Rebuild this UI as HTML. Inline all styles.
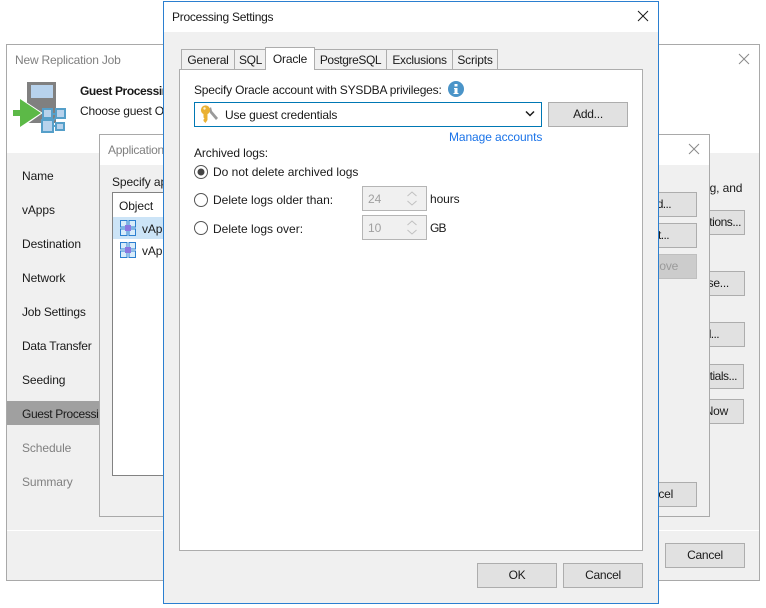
<!DOCTYPE html>
<html><head><meta charset="utf-8">
<style>
html,body{margin:0;padding:0;background:#fff}
#r{position:relative;width:766px;height:608px;overflow:hidden;background:#fff;font:12px/16px "Liberation Sans",sans-serif;color:#1a1a1a;letter-spacing:-.1px}
#r div,#r span.t,#r svg{position:absolute;box-sizing:border-box}
.t{white-space:nowrap;position:absolute}
.btn{background:#e1e1e1;border:1px solid #adadad;text-align:center;line-height:22px;color:#1a1a1a;overflow:hidden;letter-spacing:-.25px;white-space:nowrap}
.tab{background:#f0f0f0;border:1px solid #adadad;border-bottom:0;text-align:center;line-height:20px;height:20px;top:49px;letter-spacing:-.2px}
.g{color:#808080}
</style></head><body>
<div id="r">
<!-- back window -->
<div style="left:6px;top:44px;width:754px;height:537px;background:#f0f0f0;border:1px solid #a9a9a9"></div>
<div style="left:7px;top:45px;width:752px;height:108px;background:#fff"></div>
<span class="t" style="left:15px;top:52px;color:#808080;letter-spacing:-.2px">New Replication Job</span>
<svg style="left:738px;top:53px" width="12" height="12"><path d="M1 1L11 11M11 1L1 11" stroke="#8a8a8a" fill="none"/></svg>
<svg style="left:10px;top:78px" width="60" height="58" viewBox="0 0 60 58">
<rect x="17" y="4" width="29" height="41" fill="#808080"/>
<rect x="21" y="7" width="22" height="13" fill="#b7d2ec"/>
<path d="M9 20.5L31 35L9 50.5V38H2V32H9Z" fill="#fff" stroke="#fff" stroke-width="2"/>
<path d="M10 21L31 35L10 49V38H3V32H10Z" fill="#5cb947"/>
<path d="M37 36L50 36M37 36L37 48M37 48L50 48M50 36L37 48" stroke="#559fc9" stroke-width="2" fill="none"/>
<rect x="33" y="31" width="9" height="9" fill="#b7d2ec" stroke="#559fc9" stroke-width="2"/>
<rect x="46" y="31" width="9" height="9" fill="#b7d2ec" stroke="#559fc9" stroke-width="2"/>
<rect x="32" y="42" width="11" height="12" fill="#b7d2ec" stroke="#559fc9" stroke-width="2"/>
<rect x="46" y="45" width="8" height="7" fill="#b7d2ec" stroke="#559fc9" stroke-width="2"/>
</svg>
<span class="t" style="left:80px;top:83px;font-weight:bold;letter-spacing:-.4px">Guest Processing</span>
<span class="t" style="left:80px;top:103px;letter-spacing:-.2px">Choose guest OS</span>
<span class="t" style="left:22px;top:168px">Name</span>
<span class="t" style="left:22px;top:202px">vApps</span>
<span class="t" style="left:22px;top:236px">Destination</span>
<span class="t" style="left:22px;top:270px">Network</span>
<span class="t" style="left:22px;top:304px;letter-spacing:-.2px">Job Settings</span>
<span class="t" style="left:22px;top:338px;letter-spacing:-.25px">Data Transfer</span>
<span class="t" style="left:22px;top:372px">Seeding</span>
<div style="left:7px;top:401px;width:93px;height:24px;background:#a0a0a0"></div>
<span class="t" style="left:22px;top:406px;letter-spacing:-.35px">Guest Processing</span>
<span class="t g" style="left:22px;top:440px">Schedule</span>
<span class="t g" style="left:22px;top:474px">Summary</span>
<div style="left:7px;top:530px;width:752px;height:1px;background:#fff"></div>
<span class="t" style="left:703px;top:180px">ng, and</span>
<div class="btn" style="left:640px;top:210px;width:105px;height:25px;text-align:right;padding-right:3px;letter-spacing:-.45px">Applications...</div>
<div class="btn" style="left:640px;top:271px;width:105px;height:25px;text-align:right;padding-right:15px">Browse...</div>
<div class="btn" style="left:640px;top:322px;width:105px;height:25px;text-align:right;padding-right:25px;letter-spacing:-.6px">Add...</div>
<div class="btn" style="left:640px;top:364px;width:104px;height:25px;text-align:right;padding-right:6px;letter-spacing:-.5px">Credentials...</div>
<div class="btn" style="left:640px;top:399px;width:104px;height:25px;text-align:right;padding-right:15px">Test Now</div>
<div class="btn" style="left:665px;top:543px;width:80px;height:25px">Cancel</div>
<!-- middle window -->
<div style="left:99px;top:134px;width:611px;height:383px;background:#f0f0f0;border:1px solid #a9a9a9"></div>
<div style="left:100px;top:135px;width:609px;height:30px;background:#fff"></div>
<span class="t" style="left:108px;top:142px;color:#808080;letter-spacing:-.25px">Application-Aware</span>
<svg style="left:688px;top:143px" width="12" height="12"><path d="M1 1L11 11M11 1L1 11" stroke="#8a8a8a" fill="none"/></svg>
<span class="t" style="left:112px;top:174px">Specify application</span>
<div style="left:112px;top:192px;width:100px;height:284px;background:#fff;border:1px solid #828282"></div>
<span class="t" style="left:119px;top:198px">Object</span>
<div style="left:113px;top:217px;width:60px;height:22px;background:#cce4f7"></div>
<svg style="left:120px;top:220px" width="16" height="16"><g fill="#d8ecfa" stroke="#2b7fd0"><rect x=".5" y=".5" width="6.5" height="6.5"/><rect x="9" y=".5" width="6.5" height="6.5"/><rect x=".5" y="9" width="6.5" height="6.5"/><rect x="9" y="9" width="6.5" height="6.5"/></g><rect x="5" y="5" width="6" height="6" fill="#8a78e0"/></svg>
<span class="t" style="left:142px;top:221px">vApp</span>
<svg style="left:120px;top:242px" width="16" height="16"><g fill="#d8ecfa" stroke="#2b7fd0"><rect x=".5" y=".5" width="6.5" height="6.5"/><rect x="9" y=".5" width="6.5" height="6.5"/><rect x=".5" y="9" width="6.5" height="6.5"/><rect x="9" y="9" width="6.5" height="6.5"/></g><rect x="5" y="5" width="6" height="6" fill="#8a78e0"/></svg>
<span class="t" style="left:142px;top:243px">vApp</span>
<div class="btn" style="left:620px;top:192px;width:77px;height:25px;text-align:right;padding-right:25px;letter-spacing:-.6px">Add...</div>
<div class="btn" style="left:620px;top:223px;width:77px;height:25px;text-align:right;padding-right:27px;letter-spacing:-.6px">Edit...</div>
<div class="btn" style="left:620px;top:254px;width:77px;height:25px;text-align:right;padding-right:18px;background:#cccccc;border-color:#bfbfbf;color:#9a9a9a">Remove</div>
<div class="btn" style="left:620px;top:482px;width:77px;height:25px;text-align:right;padding-right:23px">Cancel</div>
<!-- front window -->
<div style="left:163px;top:1px;width:496px;height:603px;background:#f0f0f0;border:1px solid #2b7fd0"></div>
<div style="left:164px;top:2px;width:494px;height:30px;background:#fff"></div>
<span class="t" style="left:172px;top:9px;letter-spacing:-.25px">Processing Settings</span>
<svg style="left:637px;top:10px" width="12" height="12"><path d="M1 1L11 11M11 1L1 11" stroke="#1a1a1a" fill="none"/></svg>
<div style="left:179px;top:69px;width:464px;height:482px;background:#fff;border:1px solid #adadad"></div>
<div class="tab" style="left:181px;width:54px">General</div>
<div class="tab" style="left:234px;width:33px;letter-spacing:-.35px">SQL</div>
<div class="tab" style="left:314px;width:73px;letter-spacing:-.4px">PostgreSQL</div>
<div class="tab" style="left:386px;width:67px;letter-spacing:-.3px">Exclusions</div>
<div class="tab" style="left:452px;width:46px">Scripts</div>
<div class="tab" style="left:265px;width:50px;top:47px;height:23px;background:#fff;line-height:22px">Oracle</div>
<span class="t" style="left:194px;top:82px;letter-spacing:-.2px">Specify Oracle account with SYSDBA privileges:</span>
<svg style="left:448px;top:81px" width="16" height="16"><circle cx="8" cy="8" r="8" fill="#4a94c8"/><rect x="6.5" y="3" width="3" height="2.5" fill="#fff"/><path d="M6 7H9.5V12H10.5V13H5.5V12H6.5V8H6Z" fill="#fff"/></svg>
<div style="left:194px;top:102px;width:348px;height:25px;background:#fff;border:1px solid #0078b4"></div>
<svg style="left:200px;top:105px" width="20" height="19" viewBox="0 0 20 19">
<path d="M9 4L11 2L12 6L18 13L16 15L10 8Z" fill="#9a9a9a"/>
<circle cx="5.5" cy="5" r="4.6" fill="#eab133"/><circle cx="4.5" cy="3.5" r="1.2" fill="#fff6d8"/>
<path d="M3.5 8H7.5V15L5.5 18L3.5 16V14.500L4.500 13.500L3.500 12.500Z" fill="#eab133"/>
</svg>
<span class="t" style="left:225px;top:107px;letter-spacing:-.15px">Use guest credentials</span>
<svg style="left:525px;top:110px" width="10" height="8"><path d="M1 1.5L5 5.500L9 1.500" fill="none" stroke="#1a1a1a" stroke-width="1.5"/></svg>
<div class="btn" style="left:548px;top:102px;width:80px;height:25px">Add...</div>
<span class="t" style="left:449px;top:129px;color:#1a73e8">Manage accounts</span>
<span class="t" style="left:194px;top:145px">Archived logs:</span>
<svg style="left:194px;top:165px" width="14" height="14"><circle cx="7" cy="7" r="6.500" fill="#fff" stroke="#555"/><circle cx="7" cy="7" r="3.500" fill="#444"/></svg>
<span class="t" style="left:213px;top:164px;letter-spacing:0">Do not delete archived logs</span>
<svg style="left:194px;top:193px" width="14" height="14"><circle cx="7" cy="7" r="6.500" fill="#fff" stroke="#555"/></svg>
<span class="t" style="left:213px;top:192px;letter-spacing:0">Delete logs older than:</span>
<svg style="left:194px;top:221px" width="14" height="14"><circle cx="7" cy="7" r="6.500" fill="#fff" stroke="#555"/></svg>
<span class="t" style="left:213px;top:221px;letter-spacing:0">Delete logs over:</span>
<div style="left:362px;top:186px;width:65px;height:25px;background:#f0f0f0;border:1px solid #b5b5b5"></div>
<span class="t" style="left:368px;top:191px;color:#a0a0a0">24</span>
<svg style="left:406px;top:189px" width="12" height="20"><path d="M1.500 7L6 3L10.500 7M1.500 12L6 16L10.500 12" fill="none" stroke="#c0c0c0"/></svg>
<span class="t" style="left:430px;top:191px">hours</span>
<div style="left:362px;top:215px;width:65px;height:25px;background:#f0f0f0;border:1px solid #b5b5b5"></div>
<span class="t" style="left:368px;top:220px;color:#a0a0a0">10</span>
<svg style="left:406px;top:218px" width="12" height="20"><path d="M1.500 7L6 3L10.500 7M1.500 12L6 16L10.500 12" fill="none" stroke="#c0c0c0"/></svg>
<span class="t" style="left:430px;top:220px;letter-spacing:-.8px">GB</span>
<div class="btn" style="left:477px;top:563px;width:80px;height:25px">OK</div>
<div class="btn" style="left:563px;top:563px;width:80px;height:25px">Cancel</div>
</div>
</body></html>
